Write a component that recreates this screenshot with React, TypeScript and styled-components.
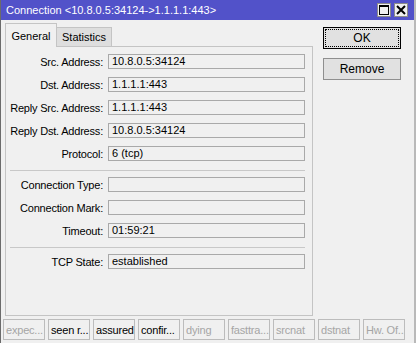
import React from 'react'
import styled, { createGlobalStyle } from 'styled-components'

const GlobalStyle = createGlobalStyle`
	html, body {
		margin: 0;
		padding: 0;
		background: #f0f0f0;
	}
	* {
		box-sizing: border-box;
	}
`

const Window = styled.div`
	width: 416px;
	height: 343px;
	display: flex;
	flex-direction: column;
	background: #f0f0f0;
	border-left: 1px solid #6b6b6b;
	border-right: 2px solid #b9b9b9;
	font-family: 'Liberation Sans', Arial, sans-serif;
	font-size: 11px;
	color: #000;
	overflow: hidden;
`

const TitleBar = styled.div`
	height: 20px;
	flex: none;
	display: flex;
	align-items: center;
	padding: 0 6px 0 5px;
	background: #5252c9;
	color: #fff;
	font-size: 11px;
`

const Title = styled.div`
	flex: 1;
	white-space: nowrap;
`

const TitleButton = styled.div`
	width: 14px;
	height: 14px;
	margin-left: 3px;
	background: #f0f0f0;
	border: 1px solid #8c8c8c;
	display: flex;
	align-items: center;
	justify-content: center;
`

const Content = styled.div`
	flex: 1;
	display: flex;
	padding: 3px 0 0 4px;
`

const Main = styled.div`
	width: 308px;
	display: flex;
	flex-direction: column;
`

const Tabs = styled.div`
	display: flex;
	align-items: flex-end;
	height: 24px;
	margin-bottom: -1px;
`

const Tab = styled.div<{ $active?: boolean }>`
	height: ${({ $active }) => ($active ? '24px' : '20px')};
	width: ${({ $active }) => ($active ? '52px' : '55px')};
	display: flex;
	align-items: center;
	justify-content: center;
	background: ${({ $active }) => ($active ? '#f0f0f0' : '#dedede')};
	border: 1px solid #c4c4c4;
	border-bottom: ${({ $active }) => ($active ? 'none' : '1px solid #c4c4c4')};
	border-left: ${({ $active }) => ($active ? '1px solid #c4c4c4' : 'none')};
	position: relative;
	z-index: ${({ $active }) => ($active ? 1 : 0)};
`

const Panel = styled.div`
	height: 270px;
	border: 1px solid #c4c4c4;
	padding: 7px 0 0 0;
	display: flex;
	flex-direction: column;
`

const Row = styled.div`
	display: flex;
	align-items: center;
	height: 15px;
	margin-bottom: 8px;
`

const Label = styled.div`
	width: 98px;
	text-align: right;
	white-space: nowrap;
	padding-right: 1px;
	letter-spacing: -0.2px;
`

const Field = styled.div`
	width: 197px;
	height: 15px;
	margin-left: 4px;
	border: 1px solid #a9a9a9;
	background: #f0f0f0;
	padding-left: 3px;
	line-height: 13px;
	white-space: nowrap;
`

const Separator = styled.div`
	height: 1px;
	margin: 1px 7px 6px 4px;
	background: #c8c8c8;
`

const Side = styled.div`
	width: 78px;
	margin-left: 10px;
	padding-top: 4px;
	display: flex;
	flex-direction: column;
	gap: 9px;
`

const Button = styled.div<{ $default?: boolean }>`
	height: 22px;
	display: flex;
	align-items: center;
	justify-content: center;
	font-size: 12px;
	background: #e1e1e1;
	border: 1px solid ${({ $default }) => ($default ? '#000' : '#8f8f8f')};
	position: relative;
	&::after {
		content: '';
		display: ${({ $default }) => ($default ? 'block' : 'none')};
		position: absolute;
		inset: 1px;
		border: 1px dotted #000;
	}
`

const StatusBar = styled.div`
	height: 26px;
	flex: none;
	display: flex;
	gap: 3px;
	padding: 2px 0 0 2px;
`

const Flag = styled.div<{ $on?: boolean }>`
	width: 42px;
	height: 21px;
	border: 1px solid #bcbcbc;
	padding-left: 2px;
	display: flex;
	align-items: center;
	white-space: nowrap;
	overflow: hidden;
	letter-spacing: -0.2px;
	color: ${({ $on }) => ($on ? '#000' : '#a5a5a5')};
`

const fields: ([string, string] | 'sep')[] = [
	['Src. Address:', '10.8.0.5:34124'],
	['Dst. Address:', '1.1.1.1:443'],
	['Reply Src. Address:', '1.1.1.1:443'],
	['Reply Dst. Address:', '10.8.0.5:34124'],
	['Protocol:', '6 (tcp)'],
	'sep',
	['Connection Type:', ''],
	['Connection Mark:', ''],
	['Timeout:', '01:59:21'],
	'sep',
	['TCP State:', 'established'],
]

const flags: [string, boolean][] = [
	['expec...', false],
	['seen r...', true],
	['assured', true],
	['confir...', true],
	['dying', false],
	['fasttra...', false],
	['srcnat', false],
	['dstnat', false],
	['Hw. Of...', false],
]

const App = () => {
	return (
		<>
			<GlobalStyle />
			<Window>
				<TitleBar>
					<Title>Connection &lt;10.8.0.5:34124-&gt;1.1.1.1:443&gt;</Title>
					<TitleButton>
						<svg width='10' height='10' viewBox='0 0 10 10'>
							<rect x='0.5' y='0.5' width='9' height='9' fill='none' stroke='#000' />
							<rect x='0' y='0' width='10' height='2' fill='#000' />
						</svg>
					</TitleButton>
					<TitleButton>
						<svg width='10' height='10' viewBox='0 0 10 10'>
							<path d='M1 1 L9 9 M9 1 L1 9' stroke='#000' strokeWidth='2' />
						</svg>
					</TitleButton>
				</TitleBar>
				<Content>
					<Main>
						<Tabs>
							<Tab $active>General</Tab>
							<Tab>Statistics</Tab>
						</Tabs>
						<Panel>
							{fields.map((f, i) =>
								f === 'sep' ? (
									<Separator key={i} />
								) : (
									<Row key={i}>
										<Label>{f[0]}</Label>
										<Field>{f[1]}</Field>
									</Row>
								)
							)}
						</Panel>
					</Main>
					<Side>
						<Button $default>OK</Button>
						<Button>Remove</Button>
					</Side>
				</Content>
				<StatusBar>
					{flags.map(([name, on]) => (
						<Flag key={name} $on={on}>
							{name}
						</Flag>
					))}
				</StatusBar>
			</Window>
		</>
	)
}

export default App
